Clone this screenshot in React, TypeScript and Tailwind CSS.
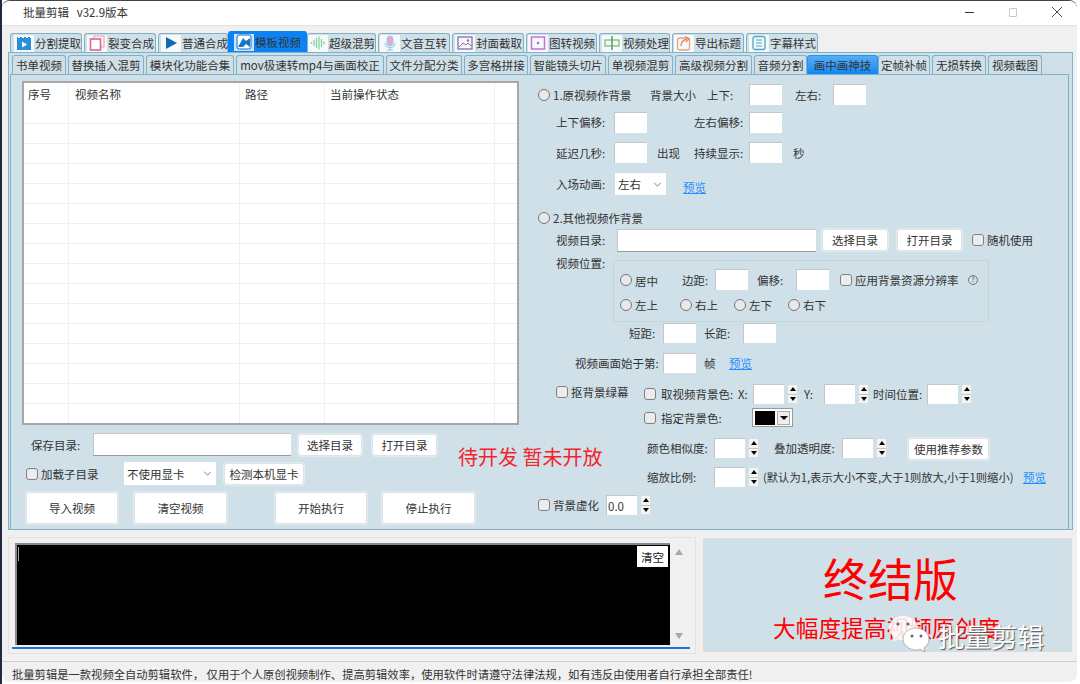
import clsx from "clsx"
import type { ReactNode } from "react"

const FONT = "font-['Microsoft_YaHei','Noto_Sans_CJK_SC','Noto_Sans',sans-serif]"

const IconFilm = () => (
  <svg viewBox="0 0 16 16" className="h-[16px] w-[16px]">
    <rect x="1" y="2" width="14" height="13" fill="#2b8fd8" />
    <path d="M2 2.5h2M6 2.5h2M10 2.5h2M14 2.5h1" stroke="#fff" strokeWidth="1" />
    <path d="M6 6.5v6l5-3z" fill="#fff" />
  </svg>
)
const IconCopy = () => (
  <svg viewBox="0 0 16 16" className="h-[16px] w-[16px]" fill="none">
    <rect x="5" y="1" width="10" height="11" stroke="#e89ab0" strokeWidth="1" />
    <rect x="1.5" y="4" width="10" height="11" fill="#fff" stroke="#e2648c" strokeWidth="1.6" />
  </svg>
)
const IconPlay = () => (
  <svg viewBox="0 0 16 16" className="h-[16px] w-[16px]">
    <path d="M3 2v12l11-6z" fill="#1268b3" />
  </svg>
)
const IconTemplate = () => (
  <svg viewBox="0 0 16 16" className="h-[16px] w-[16px]">
    <rect x="1" y="1" width="14" height="14" rx="2" fill="#fff" stroke="#0f6fb8" strokeWidth="1" />
    <path d="M2 13 7 4l3 3 4-3v9l-4-3-3 3z" fill="#1578c2" />
  </svg>
)
const IconWave = () => (
  <svg viewBox="0 0 16 16" className="h-[16px] w-[16px]" stroke="#7fd0a0" strokeWidth="1.2">
    <path d="M1.5 7v2M4 5v6M6.5 3v10M9 1.5v13M11.5 4v8M14 6.5v3" />
  </svg>
)
const IconMic = () => (
  <svg viewBox="0 0 16 16" className="h-[18px] w-[16px]" fill="none">
    <rect x="5" y="1" width="6" height="10" rx="3" fill="#e8a6cf" stroke="#9ecbea" />
    <path d="M3 8c0 6 10 6 10 0M8 12.5V15M5 15h6" stroke="#8cc4ea" strokeWidth="1.2" />
  </svg>
)
const IconImage = () => (
  <svg viewBox="0 0 16 16" className="h-[16px] w-[16px]" fill="none">
    <rect x="1" y="2" width="14" height="12" stroke="#8a6bb0" strokeWidth="1.3" />
    <path d="m2 12 4-4 3 2 2-2 3 3" stroke="#8a6bb0" />
    <circle cx="11" cy="5.5" r="1.2" fill="#8a6bb0" />
  </svg>
)
const IconSlide = () => (
  <svg viewBox="0 0 16 16" className="h-[16px] w-[16px]" fill="none">
    <rect x="1.5" y="2" width="13" height="12" stroke="#c56fe0" strokeWidth="1.5" />
    <circle cx="8" cy="8" r="1.2" fill="#b14fd8" />
  </svg>
)
const IconAlign = () => (
  <svg viewBox="0 0 16 16" className="h-[16px] w-[16px]" fill="none">
    <rect x="1" y="5" width="14" height="6" stroke="#7fbf7f" strokeWidth="1.3" />
    <path d="M8 1v14" stroke="#5aa85a" strokeWidth="1.6" />
  </svg>
)
const IconExport = () => (
  <svg viewBox="0 0 16 16" className="h-[18px] w-[16px]" fill="none">
    <rect x="1.5" y="3" width="12" height="12" rx="2" stroke="#eda27e" strokeWidth="1.3" />
    <path d="M5 11c0-4 2-6 6-7M9 1.5 13 4l-3 3" stroke="#ea8a5e" strokeWidth="1.4" />
  </svg>
)
const IconLines = () => (
  <svg viewBox="0 0 16 16" className="h-[16px] w-[16px]" fill="none">
    <rect x="2" y="1.5" width="12" height="13" rx="2" stroke="#4aa8c0" strokeWidth="1.3" />
    <path d="M5 5h6M5 8h6M5 11h6" stroke="#4aa8c0" />
  </svg>
)

const MAIN_TABS = [
  { label: "分割提取", icon: <IconFilm />, w: "w-[72px] pl-[3px]" },
  { label: "裂变合成", icon: <IconCopy />, w: "w-[72px] pl-[2px]" },
  { label: "普通合成", icon: <IconPlay />, w: "w-[70px] pl-[2px]" },
  { label: "模板视频", icon: <IconTemplate />, w: "w-[79px] -mx-[2px] pl-[5px]", active: true },
  { label: "超级混剪", icon: <IconWave />, w: "w-[69px] pl-0" },
  { label: "文音互转", icon: <IconMic />, w: "w-[72px] pl-[1px]" },
  { label: "封面截取", icon: <IconImage />, w: "w-[72px] pl-[2px]" },
  { label: "图转视频", icon: <IconSlide />, w: "w-[71px] pl-[1px]" },
  { label: "视频处理", icon: <IconAlign />, w: "w-[71px] pl-[2px]" },
  { label: "导出标题", icon: <IconExport />, w: "w-[72px] pl-[1px]" },
  { label: "字幕样式", icon: <IconLines />, w: "w-[72px] pl-[2px]" },
]

const SUB_TABS = [
  { label: "书单视频", w: "w-[54px]" },
  { label: "替换插入混剪", w: "w-[76px]" },
  { label: "模块化功能合集", w: "w-[88px]" },
  { label: "mov极速转mp4与画面校正", w: "w-[148px]" },
  { label: "文件分配分类", w: "w-[76px]" },
  { label: "多宫格拼接", w: "w-[64px]" },
  { label: "智能镜头切片", w: "w-[76px]" },
  { label: "单视频混剪", w: "w-[65px]" },
  { label: "高级视频分割", w: "w-[77px]" },
  { label: "音频分割", w: "w-[53px]" },
  { label: "画中画神技", w: "w-[71px] -mx-[2px]", active: true },
  { label: "定帧补帧", w: "w-[52px]" },
  { label: "无损转换", w: "w-[54px]" },
  { label: "视频截图", w: "w-[54px]" },
]

const ROWS = Array.from({ length: 16 }, (_, i) => i)

function Radio() {
  return <span className="h-[12px] w-[12px] shrink-0 rounded-full border border-[#777] bg-[#e9e9e9]" />
}

function Check({ className }: { className?: string }) {
  return <span className={clsx("h-[12px] w-[12px] shrink-0 rounded-[3px] border border-[#808080] bg-[#ececec]", className)} />
}

function Input({ className }: { className?: string }) {
  return <div className={clsx("shrink-0 border-l border-t border-[#c2c6c8] bg-white", className ?? "h-[21px] w-[33px]")} />
}

function Btn({ className, children }: { className: string; children: ReactNode }) {
  return (
    <div className={clsx("flex shrink-0 items-center justify-center rounded-[3px] border border-[#dde3e6] bg-white shadow-[0_0_0_1px_#e3eaee]", className)}>
      {children}
    </div>
  )
}

function Spin({ value, className }: { value?: string; className?: string }) {
  return (
    <div className={clsx("flex h-[20px] shrink-0 items-center", className)}>
      <div className="flex h-[20px] w-[31px] items-center border-l border-t border-[#c2c6c8] bg-white pl-[1px]">{value}</div>
      <div className="ml-[3px] flex h-[20px] w-[11px] flex-col gap-px border border-[#d8dde0] bg-[#bfc4c6]">
        <span className="flex flex-1 items-center justify-center bg-[#f4f4f4]">
          <span className="border-x-[3px] border-b-[4px] border-x-transparent border-b-black" />
        </span>
        <span className="flex flex-1 items-center justify-center bg-[#f4f4f4]">
          <span className="border-x-[3px] border-t-[4px] border-x-transparent border-t-black" />
        </span>
      </div>
    </div>
  )
}

function Select({ label, className }: { label: string; className: string }) {
  return (
    <div className={clsx("flex shrink-0 items-center justify-between bg-white pl-[3px] pr-[4px]", className)}>
      <span>{label}</span>
      <svg viewBox="0 0 10 6" className="h-[5px] w-[9px]" fill="none" stroke="#666">
        <path d="m1 1 4 4 4-4" />
      </svg>
    </div>
  )
}

function Link({ className }: { className?: string }) {
  return <span className={clsx("shrink-0 text-[#1e8fff] underline", className)}>预览</span>
}

export default function App() {
  return (
    <div className={clsx("flex h-[684px] w-[1080px] overflow-hidden bg-white text-[11.5px] leading-[16px] text-[#333]", FONT)}>
      <div className="h-full w-[2px] shrink-0 bg-[#1f2b3d]" />
      <div className="flex h-[682px] w-[1075px] shrink-0 flex-col overflow-hidden rounded-b-[8px] rounded-t-[8px] border-t border-[#444] bg-[#f0f0f0]">

        {/* title bar */}
        <div className="flex h-[25px] shrink-0 items-center border-b border-[#e2e2e2] bg-white pb-[2px] pl-[21px] pr-[15px]">
          <span className="whitespace-pre">批量剪辑   v32.9版本</span>
          <div className="ml-auto flex items-center gap-[35px]">
            <span className="h-px w-[9px] bg-[#333]" />
            <span className="h-[9px] w-[8px] rounded-[1px] border border-[#c8c8c8]" />
            <svg viewBox="0 0 10 10" className="h-[10px] w-[10px]" stroke="#333" strokeWidth="0.9">
              <path d="m0 0 10 10M10 0 0 10" />
            </svg>
          </div>
        </div>

        {/* main tabs */}
        <div className="mt-[5px] flex h-[21px] shrink-0 items-end gap-[2px] pl-[8px]">
          {MAIN_TABS.map(t => (
            <div
              key={t.label}
              className={clsx(
                "flex shrink-0 items-center whitespace-nowrap rounded-t-[3px] border border-b-0",
                t.w,
                t.active ? "z-10 h-[21px] border-[#0a84f5] bg-[#0a84f5]" : "h-[19px] border-[#7fb2c9] bg-[#cfe0e8]",
              )}
            >
              <span className="flex h-[17px] w-[20px] shrink-0 items-center justify-center bg-white/80">{t.icon}</span>
              <span className="ml-[1px]">{t.label}</span>
            </div>
          ))}
        </div>

        {/* main panel */}
        <div className="ml-[6px] flex h-[478px] w-[1065px] shrink-0 flex-col border border-[#7fb2c9] bg-[#cfe0e8]">
          <div className="flex h-[21px] shrink-0 items-end gap-[2px] pl-[3px]">
            {SUB_TABS.map(t => (
              <div
                key={t.label}
                className={clsx(
                  "flex h-[19px] shrink-0 items-center justify-center whitespace-nowrap rounded-t-[3px] border border-b-0",
                  t.w,
                  t.active ? "z-10 border-[#2a93f0] bg-gradient-to-b from-[#55aef2] to-[#0c86f5]" : "border-[#7fb2c9] bg-[#cfe0e8]",
                )}
              >
                {t.label}
              </div>
            ))}
          </div>

          <div className="ml-[1px] flex w-[1059px] flex-1 border border-b-0 border-[#7fb2c9] bg-[#cfe0e8]">

            {/* left column */}
            <div className="ml-[11px] mt-[6px] w-[516px] shrink-0">
              <div className="h-[344px] w-[497px] overflow-hidden border-2 border-[#a6a6a6] bg-white">
                <div className="grid h-[22px] grid-cols-[45px_171px_85px_170px_1fr] items-center">
                  <span className="h-full border-r border-[#f0f0f0] pl-[4px] pt-[3px]">序号</span>
                  <span className="h-full border-r border-[#f0f0f0] pl-[6px] pt-[3px]">视频名称</span>
                  <span className="h-full border-r border-[#f0f0f0] pl-[5px] pt-[3px]">路径</span>
                  <span className="h-full border-r border-[#f0f0f0] pl-[5px] pt-[3px]">当前操作状态</span>
                  <span />
                </div>
                {ROWS.map(r => (
                  <div key={r} className={clsx("grid grid-cols-[45px_171px_85px_170px_1fr] border-b border-[#f0f0f0]", r === 0 ? "h-[19px]" : "h-[20px]")}>
                    <span className="border-r border-[#f0f0f0]" />
                    <span className="border-r border-[#f0f0f0]" />
                    <span className="border-r border-[#f0f0f0]" />
                    <span className="border-r border-[#f0f0f0]" />
                    <span />
                  </div>
                ))}
              </div>

              <div className="mt-[8px] flex">
                <div className="w-[436px] shrink-0">
                  <div className="flex h-[23px] items-center pl-[9px]">
                    <span className="w-[62px] shrink-0">保存目录:</span>
                    <Input className="h-[23px] w-[198px] border-b border-b-[#999]" />
                    <Btn className="ml-[7px] h-[22px] w-[64px]">选择目录</Btn>
                    <Btn className="ml-[10px] h-[22px] w-[65px]">打开目录</Btn>
                  </div>
                  <div className="mt-[6px] flex h-[23px] items-center pl-[4px]">
                    <Check />
                    <span className="ml-[3px] w-[83px] shrink-0">加载子目录</span>
                    <Select label="不使用显卡" className="h-[23px] w-[92px]" />
                    <Btn className="ml-[8px] h-[22px] w-[80px]">检测本机显卡</Btn>
                  </div>
                </div>
                <span className="mb-[4px] self-center whitespace-nowrap text-[20px] leading-[26px] text-[#f5222d]">待开发 暂未开放</span>
              </div>

              <div className="mt-[7px] flex h-[32px] pl-[4px]">
                <Btn className="h-[32px] w-[92px]">导入视频</Btn>
                <Btn className="ml-[16px] h-[32px] w-[93px]">清空视频</Btn>
                <Btn className="ml-[48px] h-[32px] w-[92px]">开始执行</Btn>
                <Btn className="ml-[15px] h-[32px] w-[93px]">停止执行</Btn>
              </div>
            </div>

            {/* right column */}
            <div className="mt-[9px] flex-1 whitespace-nowrap">
              <div className="flex h-[21px] items-center">
                <Radio />
                <span className="ml-[3px] w-[97px] shrink-0">1.原视频作背景</span>
                <span className="w-[57px] shrink-0">背景大小</span>
                <span className="w-[42px] shrink-0">上下:</span>
                <Input />
                <span className="ml-[13px] w-[38px] shrink-0">左右:</span>
                <Input />
              </div>

              <div className="mt-[7px] flex h-[20px] items-center pl-[18px]">
                <span className="w-[58px] shrink-0">上下偏移:</span>
                <Input />
                <span className="ml-[47px] w-[55px] shrink-0">左右偏移:</span>
                <Input />
              </div>

              <div className="mt-[10px] flex h-[21px] items-center pl-[18px]">
                <span className="w-[58px] shrink-0">延迟几秒:</span>
                <Input />
                <span className="ml-[10px] w-[37px] shrink-0">出现</span>
                <span className="w-[55px] shrink-0">持续显示:</span>
                <Input />
                <span className="ml-[11px]">秒</span>
              </div>

              <div className="mt-[10px] flex h-[22px] items-center pl-[18px]">
                <span className="w-[59px] shrink-0">入场动画:</span>
                <Select label="左右" className="h-[22px] w-[51px]" />
                <Link className="ml-[17px] mt-[6px]" />
              </div>

              <div className="mt-[15px] flex h-[16px] items-center">
                <Radio />
                <span className="ml-[3px]">2.其他视频作背景</span>
              </div>

              <div className="mt-[2px] flex h-[24px] items-center pl-[18px]">
                <span className="w-[61px] shrink-0">视频目录:</span>
                <Input className="h-[23px] w-[199px] border-b border-b-[#999]" />
                <Btn className="ml-[6px] h-[22px] w-[66px]">选择目录</Btn>
                <Btn className="ml-[9px] h-[22px] w-[65px]">打开目录</Btn>
                <Check className="ml-[10px]" />
                <span className="ml-[3px]">随机使用</span>
              </div>

              <div className="mt-[8px] flex items-start pl-[18px]">
                <span className="-mt-[5px] w-[57px] shrink-0">视频位置:</span>
                <div className="h-[62px] w-[376px] shrink-0 border border-[#c6d5dc] pl-[6px] pt-[8px]">
                  <div className="flex h-[21px] items-center">
                    <Radio />
                    <span className="ml-[3px] mt-[3px] w-[47px] shrink-0">居中</span>
                    <span className="w-[33px] shrink-0">边距:</span>
                    <Input />
                    <span className="ml-[9px] w-[39px] shrink-0">偏移:</span>
                    <Input />
                    <Check className="ml-[11px]" />
                    <span className="ml-[3px] w-[113px] shrink-0">应用背景资源分辨率</span>
                    <span className="flex h-[10px] w-[10px] items-center justify-center rounded-full border border-[#777] text-[7px] leading-none text-[#555]">?</span>
                  </div>
                  <div className="mt-[7px] flex h-[16px] items-center">
                    <Radio />
                    <span className="ml-[3px] w-[45px] shrink-0">左上</span>
                    <Radio />
                    <span className="ml-[3px] w-[39px] shrink-0">右上</span>
                    <Radio />
                    <span className="ml-[3px] w-[39px] shrink-0">左下</span>
                    <Radio />
                    <span className="ml-[3px]">右下</span>
                  </div>
                </div>
              </div>

              <div className="mt-[1px] flex h-[20px] items-center pl-[91px]">
                <span className="w-[34px] shrink-0">短距:</span>
                <Input className="h-[20px] w-[33px]" />
                <span className="ml-[8px] w-[39px] shrink-0">长距:</span>
                <Input className="h-[20px] w-[33px]" />
              </div>

              <div className="mt-[10px] flex h-[20px] items-center pl-[37px]">
                <span className="w-[88px] shrink-0">视频画面始于第:</span>
                <Input className="h-[20px] w-[33px]" />
                <span className="ml-[8px] w-[25px] shrink-0">帧</span>
                <Link />
              </div>

              <div className="mt-[11px] flex">
                <div className="flex h-[16px] w-[106px] shrink-0 items-center pl-[18px]">
                  <Check />
                  <span className="ml-[3px]">抠背景绿幕</span>
                </div>
                <div>
                  <div className="flex h-[20px] items-center">
                    <Check />
                    <span className="ml-[5px] w-[77px] shrink-0">取视频背景色:</span>
                    <span className="w-[15px] shrink-0">X:</span>
                    <Spin />
                    <span className="ml-[6px] w-[20px] shrink-0">Y:</span>
                    <Spin />
                    <span className="ml-[4px] w-[54px] shrink-0">时间位置:</span>
                    <Spin />
                  </div>
                  <div className="mt-[4px] flex h-[19px] items-center">
                    <Check />
                    <span className="ml-[5px] w-[91px] shrink-0">指定背景色:</span>
                    <div className="flex h-[19px] w-[41px] items-center gap-[2px] border border-[#999] bg-white p-[2px]">
                      <span className="h-[14px] w-[20px] bg-black" />
                      <span className="flex h-[14px] flex-1 items-center justify-center border border-[#aaa] bg-[#eee]">
                        <span className="border-x-[4px] border-t-[4px] border-x-transparent border-t-black" />
                      </span>
                    </div>
                  </div>
                  <div className="mt-[11px] flex h-[22px] items-start pl-[3px]">
                    <span className="mt-[2px] w-[67px] shrink-0">颜色相似度:</span>
                    <Spin />
                    <span className="ml-[15px] mt-[2px] w-[68px] shrink-0">叠加透明度:</span>
                    <Spin />
                    <Btn className="ml-[21px] h-[22px] w-[81px]">使用推荐参数</Btn>
                  </div>
                  <div className="mt-[7px] flex h-[20px] items-center pl-[3px]">
                    <span className="w-[67px] shrink-0">缩放比例:</span>
                    <Spin />
                    <span className="ml-[4px] w-[260px] shrink-0 text-[11.3px]">(默认为1,表示大小不变,大于1则放大,小于1则缩小)</span>
                    <Link />
                  </div>
                </div>
              </div>

              <div className="mt-[8px] flex h-[20px] items-center">
                <Check />
                <span className="ml-[3px] w-[53px] shrink-0">背景虚化</span>
                <Spin value="0.0" />
              </div>
            </div>
          </div>
        </div>

        {/* console + promo */}
        <div className="ml-[6px] mt-[7px] flex shrink-0 items-start">
          <div className="h-[117px] w-[688px] shrink-0 border border-[#e2e2e2] pl-[6px] pt-[5px]">
            <div className="flex h-[102px]">
              <div className="relative w-[655px] shrink-0 border-l-2 border-t-2 border-[#888] bg-black">
                <span className="absolute left-[1px] top-[2px] h-[14px] w-px bg-[#aaa]" />
                <div className="absolute right-[2px] top-[1px] flex h-[21px] w-[31px] items-center justify-center bg-white text-[#222]">清空</div>
              </div>
              <div className="flex w-[17px] shrink-0 flex-col items-center justify-between py-[6px]">
                <span className="border-x-[4px] border-b-[6px] border-x-transparent border-b-[#a8a8a8]" />
                <span className="border-x-[4px] border-t-[6px] border-x-transparent border-t-[#a8a8a8]" />
              </div>
            </div>
            <div className="-ml-[3px] mt-[2px] h-[2px] w-[678px] bg-[#1976d2]" />
          </div>

          <div className="relative ml-[7px] mt-[1px] flex h-[114px] w-[369px] shrink-0 flex-col items-center border border-[#dcdcdc] bg-[#cfe0e8] pt-[11px] text-[#ff0000]">
            <span className="ml-[6px] text-[45px] leading-[56px]">终结版</span>
            <span className="-ml-[2px] mt-[10px] whitespace-nowrap text-[22.7px] leading-[24px]">大幅度提高视频原创度</span>

            {/* watermark */}
            <svg viewBox="0 0 42 38" className="absolute left-[184px] top-[76px] h-[38px] w-[42px]">
              <path d="M15 1C7 1 1 6 1 13c0 4 2 7 5 9l-1 5 5-3c2 1 3 1 5 1 8 0 15-5 15-12S23 1 15 1z" fill="#fff" fillOpacity="0.85" />
              <circle cx="10" cy="9" r="1.6" fill="#666" />
              <circle cx="20" cy="9" r="1.6" fill="#666" />
              <path d="M28 13c-7 0-13 5-13 11s6 11 13 11c1 0 3 0 4-1l5 3-1-4c3-2 5-5 5-9 0-6-6-11-13-11z" fill="#fff" stroke="#777" strokeWidth="0.5" />
              <circle cx="24" cy="21" r="1.5" fill="#666" />
              <circle cx="33" cy="21" r="1.5" fill="#666" />
            </svg>
            <span className="absolute left-[234px] top-[80px] whitespace-nowrap text-[26.5px] leading-[34px] text-white [text-shadow:1px_1px_1px_#555]">批量剪辑</span>
          </div>
        </div>

        {/* status bar */}
        <div className="mt-[7px] flex flex-1 items-center border-t border-[#cfcfcf] pl-[10px] pt-[4px] text-[11.3px]">
          批量剪辑是一款视频全自动剪辑软件， 仅用于个人原创视频制作、提高剪辑效率，使用软件时请遵守法律法规，如有违反由使用者自行承担全部责任!
        </div>
      </div>
    </div>
  )
}
